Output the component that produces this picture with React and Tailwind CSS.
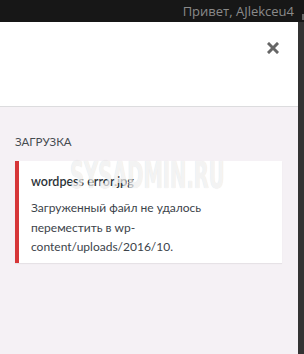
import React from 'react';

export default function App() {
  return (
    <div className="relative w-[304px] h-[354px] overflow-hidden bg-[#f5f1f5] font-['Lato',sans-serif]">
      {/* admin bar */}
      <div className="h-[22px] bg-[#171717] flex items-center justify-end pr-[10px]">
        <span className="text-[13px] text-[#8a8a8a] leading-none font-['Open_Sans',sans-serif]">Привет, AJlekceu4</span>
        <span className="absolute right-0 top-[14px] w-[2px] h-[6px] bg-[#666]" />
      </div>

      <div className="flex h-[332px]">
        <div className="flex-1 flex flex-col">
          {/* modal header */}
          <div className="h-[85px] bg-white border-b border-[#dcdcde] flex justify-end pt-[19px] pr-[19px]">
            <svg width="12" height="12" viewBox="0 0 12 12" className="mt-[1px]">
              <path d="M2 2 L10 10 M10 2 L2 10" stroke="#666" strokeWidth="3" strokeLinecap="square" />
            </svg>
          </div>

          {/* content */}
          <div className="px-[15px] pt-[27px]">
            <h3 className="text-[11.5px] text-[#464b50] uppercase leading-[16px]">Загрузка</h3>
            <div className="mt-[11px] w-[267px] bg-white border-l-[4px] border-[#d63638] shadow-[0_1px_1px_rgba(0,0,0,0.06)] pl-[12px] pr-[10px] pt-[12px] pb-[6px]">
              <div className="text-[12.5px] text-[#2c3338] font-semibold leading-[18px]">wordpess error.jpg</div>
              <p className="mt-[7px] text-[12px] text-[#3c434a] leading-[19.5px]">
                Загруженный файл не удалось переместить в wp-content/uploads/2016/10.
              </p>
            </div>
          </div>
        </div>
        <div className="w-[6px] bg-[#333]" />
      </div>

      {/* watermark */}
      <div className="absolute left-[70px] top-[156px] text-[38px] leading-none font-bold text-white/70 font-['DejaVu_Sans_Condensed',sans-serif] [text-shadow:0_0_1px_rgba(0,0,0,0.15)] scale-x-[0.57] origin-left">
        SYSADMIN.RU
      </div>
    </div>
  );
}
